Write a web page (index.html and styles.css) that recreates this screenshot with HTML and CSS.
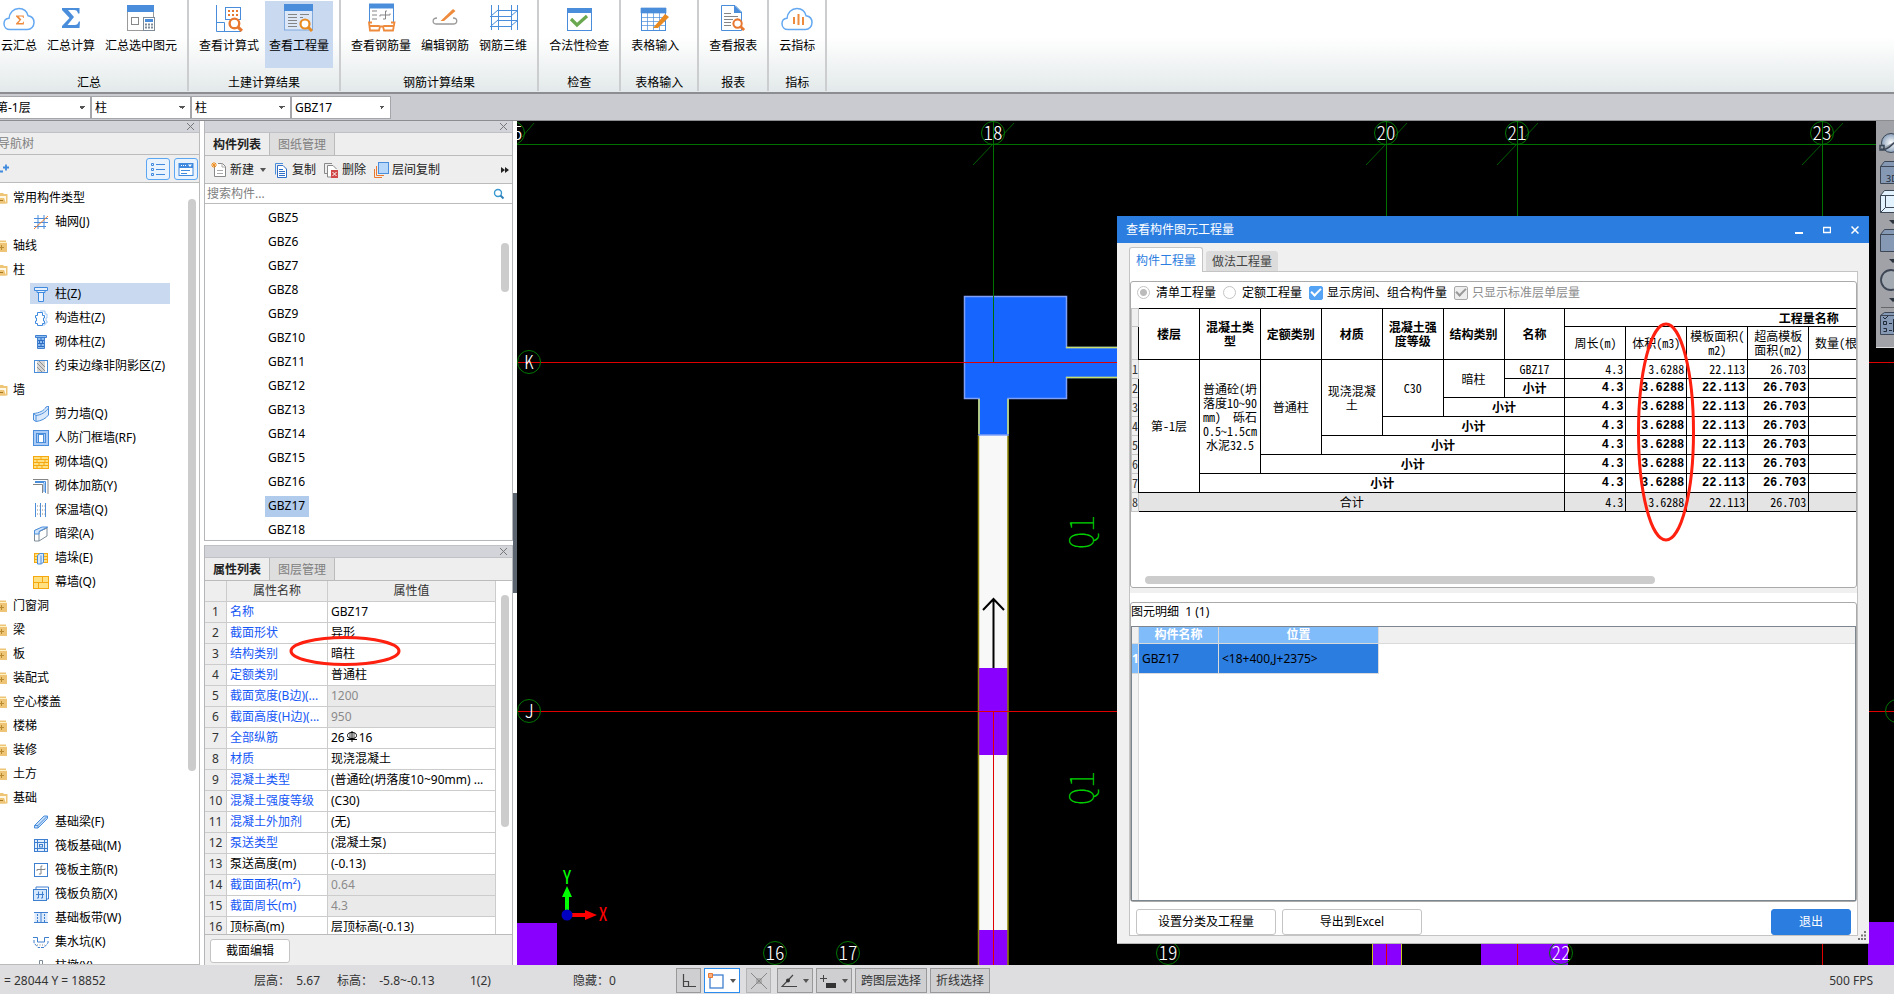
FILE: index.html
```html
<!DOCTYPE html>
<html lang="zh-CN">
<head>
<meta charset="utf-8">
<title>查看构件图元工程量</title>
<link rel="stylesheet" href="styles.css">
</head>
<body>
<svg class="defs" aria-hidden="true">
  <symbol id="cloud" viewBox="0 0 32 24"><path d="M7 22.500C3.500 22.500 1 20 1 16.800 1 13.500 3.200 11.500 6 11.300 6.500 5.500 10.500 1.500 16 1.500c4.800 0 8 3 9 7.200 3.500.5 6 3.200 6 6.800 0 4-3 7-6.500 7z" fill="#fff" stroke="#64a8f2" stroke-width="1.500"/></symbol>
  <symbol id="sigma" viewBox="0 0 18 20"><path d="M0 0H17.500V5.500H16C15.500 3 14.500 2 12 2H6L12 9 5.500 17H12.500C15 17 16 16 16.800 13.500H18L17.500 20H0V18L7.500 10 0 2Z" fill="currentColor"/></symbol>
  <symbol id="lens" viewBox="0 0 14 14"><circle cx="6" cy="6" r="4.500" fill="#fff" stroke="currentColor" stroke-width="2.200"/><path d="M9.200 9.200 13 13" stroke="currentColor" stroke-width="3"/></symbol>
  <symbol id="f-open" viewBox="0 0 8 12"><path d="M0 1H3L4 2H7.500V11.500H0Z" fill="#eec576"/><path d="M0 7V4H6V11.500L4 7Z" fill="#fff8e6"/><path d="M0 6H4L6 11.500H0Z" fill="#eec576"/><path d="M0 8.500H3" stroke="#a87820"/></symbol>
  <symbol id="f-shut" viewBox="0 0 8 12"><path d="M0 0.500H6V2H7V12H0Z" fill="#eec576"/><path d="M0 2.500H7" stroke="#fff1c8"/><path d="M0 7.500H4M1.500 5V10" stroke="#b98a30"/></symbol>
  <symbol id="i-grid" viewBox="0 0 16 16"><path d="M5 1V15M11 1V15M1 4.500H15M1 8.500H15M1 12.500H13" stroke="#4a8edb" fill="none"/><path d="M1 15 15 2" stroke="#f08030"/></symbol>
  <symbol id="i-col" viewBox="0 0 16 16"><path d="M1.500 1.500H14.500V4.500H1.500ZM4 4.500H12V6.500H4ZM5.500 6.500H10.500V15.500H5.500Z" fill="#e6f1fd" stroke="#3f8ade"/></symbol>
  <symbol id="i-gz" viewBox="0 0 16 16"><path d="M7 1H12V4H14V8H13V11H14V13H12V15H9" fill="none" stroke="#9cc6f5"/><path d="M4.500 2.500H9.500V5.500H11.500V8H10.500V11H11.500V13.500H9.500V15.500H4.500V13.500H2.500V11H3.500V8H2.500V5.500H4.500Z" fill="#fff" stroke="#3f8ade"/></symbol>
  <symbol id="i-qz" viewBox="0 0 16 16"><path d="M2.500 1.500H13.500V3.500H2.500ZM4.500 3.500H11.500V14.500H4.500Z" fill="#8fbdf0" stroke="#3f7fd0"/><path d="M5 6.500H11M5 9.500H11M5 12.500H11M8 4V6M6.500 7V9M9.500 7V9M8 10V12" stroke="#2d6cc0"/></symbol>
  <symbol id="i-ys" viewBox="0 0 16 16"><rect x="1.500" y="2.500" width="13" height="12" fill="#fff" stroke="#4a8edb"/><path d="M4 3H12V14H4Z" fill="#d4d4d4"/><path d="M4 5 12 13M4 9 9 14M6 3 12 9" stroke="#909090"/></symbol>
  <symbol id="i-jl" viewBox="0 0 16 16"><path d="M.500 7.500C6 7 11 5 13 1L15.500 0V9C13 12.500 8 15 3 15.500L.500 14Z" fill="#d9e9fb" stroke="#4a8edb"/><path d="M.500 7.500 3 9.500C8 9 13 6 15.500 2M3 9.500V15" stroke="#4a8edb" fill="none"/></symbol>
  <symbol id="i-rf" viewBox="0 0 16 16"><rect x=".5" y=".5" width="15" height="15" fill="#a9cbf5" stroke="#4a8edb"/><rect x="3.500" y="3.500" width="9" height="9" fill="none" stroke="#4a8edb"/><rect x="5.500" y="4.500" width="5" height="8" fill="#fff" stroke="#4a8edb"/></symbol>
  <symbol id="i-brick" viewBox="0 0 16 16"><rect x=".5" y="2.500" width="15" height="12" fill="#ffe082" stroke="#f5a80f"/><path d="M1 5.500H15M1 8.500H15M1 11.500H15M8 3V5M4 6V8M12 6V8M6 9V11M11 9V11M4 12V14M9 12V14" stroke="#f5a80f"/></symbol>
  <symbol id="i-jj" viewBox="0 0 16 16"><path d="M0 1.500H15V16M0 6.500H9.500V15" fill="none" stroke="#858585"/><path d="M2 3.500H12.500V15M2 4.500H11V14" fill="none" stroke="#4a8edb"/></symbol>
  <symbol id="i-bw" viewBox="0 0 16 16"><path d="M2.500 1V15M7.500 1V15M12.500 1V15" stroke="#4a8edb"/><path d="M4 4H14M4 8H14M4 12H14" stroke="#858585" stroke-dasharray="1 1.500"/></symbol>
  <symbol id="i-al" viewBox="0 0 16 16"><path d="M1.500 4.500 9 1.500H14.500L6 5.500V15H1.500ZM6 5.500 14 2V10L6 15" fill="#fff" stroke="#7d8b99"/><path d="M1.500 4.500 9 1H14.500L6 5.500V8H1.500Z" fill="#cfe3fb" stroke="#4a8edb"/></symbol>
  <symbol id="i-qd" viewBox="0 0 16 16"><rect x="1.500" y="3.500" width="13" height="9" fill="#ffe082" stroke="#f5a80f"/><path d="M1 6.500H15M1 9.500H15" stroke="#f5a80f"/><path d="M4.500 5.500 7 3.500H10.500V12L8.500 14H4.500ZM8 5.500V14" fill="#d9e9fb" stroke="#4a8edb"/></symbol>
  <symbol id="i-mq" viewBox="0 0 16 16"><rect x=".5" y="2.500" width="15" height="12" fill="#ffe082" stroke="#f5a80f"/><path d="M1 8.500H15M9.500 3V8M5.500 9V14" stroke="#f5a80f"/></symbol>
  <symbol id="i-jcl" viewBox="0 0 16 16"><path d="M1.500 11.500 11 2H14.500V4.500L5 14H1.500Z" fill="#c7def8" stroke="#4a8edb"/><path d="M1.500 11.500H5V14M5 11.500 14 2.500" fill="none" stroke="#4a8edb"/></symbol>
  <symbol id="i-fb" viewBox="0 0 16 16"><rect x="1.500" y="1.500" width="13" height="12" fill="#e3effc" stroke="#3f7fd0"/><path d="M4.500 2V13M11.500 2V13M2 4.500H14M2 10.500H14" stroke="#3f7fd0"/><rect x="6.500" y="6.500" width="3" height="2.500" fill="none" stroke="#3f7fd0"/></symbol>
  <symbol id="i-zj" viewBox="0 0 16 16"><rect x="1.500" y="1.500" width="13" height="13" fill="#fff" stroke="#3f7fd0"/><path d="M4 9V7.500H12V6.500M9.500 4H8V12H6" fill="none" stroke="#858585"/></symbol>
  <symbol id="i-fj" viewBox="0 0 16 16"><path d="M3 3V1H15.500V13H13" fill="#fff" stroke="#3f7fd0"/><rect x=".5" y="3.500" width="13" height="11" fill="#d4e6fb" stroke="#3f7fd0"/><path d="M3 8.500H11M5.500 5.500V12H4M9.500 5.500V12H8" fill="none" stroke="#3f7fd0"/></symbol>
  <symbol id="i-bd" viewBox="0 0 16 16"><rect x="1.500" y="2.500" width="13" height="10" fill="#dceafb"/><path d="M1 2.500H15M1 12.500H15M8 3V12" stroke="#3f7fd0"/><path d="M4.500 4V12M11.500 4V12" stroke="#3f7fd0" stroke-dasharray="2 1"/></symbol>
  <symbol id="i-js" viewBox="0 0 16 16"><path d="M0 3.500H4.500V8H11.500V3.500H16" fill="none" stroke="#3f7fd0"/><path d="M1 6V9L5 13.500H11L15 9V6" fill="none" stroke="#3f7fd0" stroke-dasharray="3 1"/><path d="M4 11H12" stroke="#888" stroke-dasharray="1 1.500"/></symbol>
  <symbol id="i-zd" viewBox="0 0 16 16"><path d="M6.500 12V2.500H9.500V12M3.500 14V10.500H12.500V14" fill="none" stroke="#7d8b99"/></symbol>
</svg>

<header class="ribbon">
  <section class="group first">
    <div class="items">
      <button class="item"><svg width="32" height="26" viewBox="0 0 32 26"><use href="#cloud" y="2" width="32" height="24"/><use href="#sigma" x="13" y="10" width="8" height="10" color="#ee8a3c"/></svg>云汇总</button>
      <button class="item"><svg width="32" height="26" viewBox="0 0 32 26"><use href="#sigma" x="7" y="3" width="18" height="20" color="#4a8edb"/></svg>汇总计算</button>
      <button class="item"><svg width="32" height="26" viewBox="0 0 32 26"><rect x="2.500" y="1.500" width="26" height="24" fill="#fff" stroke="#9a9a9a"/><path d="M2 0H29V7H2Z" fill="#4a8edb"/><rect x="6.500" y="12.500" width="7" height="7" fill="none" stroke="#888"/><rect x="18.500" y="12.500" width="11" height="13" fill="#fff" stroke="#7d8b99"/><path d="M20 14H28V17H20Z" fill="#4a8edb"/><path d="M20 19.500H28M20 22.500H28" stroke="#7d8b99" stroke-width="2" stroke-dasharray="2 1"/></svg>汇总选中图元</button>
    </div>
    <h2>汇总</h2>
  </section>
  <section class="group">
    <div class="items">
      <button class="item"><svg width="32" height="28" viewBox="0 0 32 28"><path d="M3.500 1V27.500H28M3.500 18.500H11.500V27" fill="none" stroke="#4a8edb"/><rect x="12.500" y="3.500" width="15" height="12" fill="#fff" stroke="#4a8edb"/><path d="M15 7H26M15 11H26" stroke="#e87830" stroke-width="2" stroke-dasharray="2 2"/><use href="#lens" x="15" y="13" width="15" height="15" color="#e87830"/></svg>查看计算式</button>
      <button class="item active"><svg width="32" height="28" viewBox="0 0 32 28"><rect x="1.500" y="1" width="28" height="25" fill="#dce7f7" stroke="#7fa8dc"/><path d="M1 0H30V7H1Z" fill="#4a8edb"/><path d="M5 10.500H14M17 10.500H26M5 13.500H14M17 13.500H20M5 16.500H14M5 19.500H14M5 22.500H14" stroke="#858585"/><use href="#lens" x="16" y="14" width="14" height="14" color="#e88a20"/></svg>查看工程量</button>
    </div>
    <h2>土建计算结果</h2>
  </section>
  <section class="group">
    <div class="items">
      <button class="item"><svg width="32" height="29" viewBox="0 0 32 29"><rect x="4.500" y="1" width="24" height="20" fill="#fff" stroke="#4a8edb"/><path d="M4 0H29V5H4Z" fill="#4a8edb"/><path d="M7 7.500H12M7 11.500H12M7 15.500H12" stroke="#858585"/><path d="M15 13V11.500H25V10M22 7.500H20.500V15.500H18" fill="none" stroke="#858585"/><path d="M2 19H31L29 29H4Z" fill="#fff"/><path d="M7 19H4L5 27H14L15 23H18L19 27H28L29.500 19H26M4.500 22.500H14L15 23M18 23 19 22.500H29" fill="none" stroke="#ee8a3c" stroke-width="1.800"/></svg>查看钢筋量</button>
      <button class="item"><svg width="32" height="28" viewBox="0 0 32 28"><path d="M8 14C3 14 3 20 7 20H24C29 20 29 14 24 14" fill="none" stroke="#999" stroke-width="1.300"/><path d="M11.500 17 24 5 26.500 7 15 17Z" fill="#ee8a3c"/></svg>编辑钢筋</button>
      <button class="item"><svg width="32" height="28" viewBox="0 0 32 28"><path d="M4.500 1V26M11.500 1V26M24.500 1V26M30.500 1V26M3 12.500H25M10 6.500H31M3 22.500H25M10 16.500H31M4 12 11 6M24 12 31 6M4 22 11 16M24 22 31 16" fill="none" stroke="#4a8edb"/></svg>钢筋三维</button>
    </div>
    <h2>钢筋计算结果</h2>
  </section>
  <section class="group">
    <div class="items">
      <button class="item"><svg width="32" height="26" viewBox="0 0 32 26"><rect x="4.500" y="3.500" width="24" height="22" fill="#fff" stroke="#4a8edb"/><path d="M4 3H29V8H4Z" fill="#4a8edb"/><path d="M8 14 14 20 24 11" fill="none" stroke="#6aa84f" stroke-width="3.200"/></svg>合法性检查</button>
    </div>
    <h2>检查</h2>
  </section>
  <section class="group wide">
    <div class="items">
      <button class="item"><svg width="32" height="26" viewBox="0 0 32 26"><rect x="2.500" y="3.500" width="24" height="22" fill="#fff" stroke="#4a8edb"/><path d="M2 3H27V8H2ZM3 12.500H26M3 16.500H26M3 20.500H26M8.500 8V25M14.500 8V25M20.500 8V25" fill="#4a8edb" stroke="#4a8edb" stroke-width=".7"/><path d="M14 23 26 9 30 12 19 23Z" fill="#e88a20"/></svg>表格输入</button>
    </div>
    <h2>表格输入</h2>
  </section>
  <section class="group">
    <div class="items">
      <button class="item"><svg width="32" height="28" viewBox="0 0 32 28"><path d="M4.500 1.500H18L24.500 8V26.500H4.500Z" fill="#fff" stroke="#4a8edb"/><path d="M17 1 25 9H17Z" fill="#4a8edb"/><path d="M7 9.500H14M7 12.500H21M7 15.500H16M7 18.500H14M7 21.500H14" stroke="#858585"/><use href="#lens" x="15" y="14" width="13" height="13" color="#e87830"/></svg>查看报表</button>
    </div>
    <h2>报表</h2>
  </section>
  <section class="group">
    <div class="items">
      <button class="item"><svg width="32" height="26" viewBox="0 0 32 26"><use href="#cloud" y="2" width="32" height="24"/><path d="M13 12V19M17.500 9V20M22 12V20" stroke="#ee8a3c" stroke-width="2"/></svg>云指标</button>
    </div>
    <h2>指标</h2>
  </section>
</header>

<div class="selectors">
  <select class="floor" aria-label="楼层"><option>第-1层</option></select>
  <select aria-label="构件大类"><option>柱</option></select>
  <select aria-label="构件类型"><option>柱</option></select>
  <select aria-label="构件"><option>GBZ17</option></select>
</div>

<main class="work">
  <aside class="nav">
    <div class="strip"><button class="shut" aria-label="关闭导航树"></button></div>
    <h2 class="navtitle">导航树</h2>
    <div class="navtools">
      <svg width="10" height="12" viewBox="0 0 10 12"><path d="M0 8.500H3M3 4.500H9M6 1.500V7.500" stroke="#3f8ade" stroke-width="1.800"/></svg>
      <button class="sq" aria-label="列表"><svg width="16" height="16" viewBox="0 0 16 16"><path d="M6 3.500H15M6 8.500H15M6 13.500H15" stroke="#3f8ade"/><path d="M1.500 2.500H3.500V4.500H1.500ZM1.500 7.500H3.500V9.500H1.500ZM1.500 12.500H3.500V14.500H1.500Z" fill="none" stroke="#3f8ade"/></svg></button>
      <button class="sq" aria-label="面板"><svg width="16" height="16" viewBox="0 0 16 16"><rect x="1" y="2.500" width="14" height="12" fill="#fff" stroke="#3f8ade"/><path d="M1 2H15V7H1Z" fill="#3f8ade"/><path d="M3 4.500H8" stroke="#fff" stroke-dasharray="1 1"/><path d="M10 3.500H14L12 6Z" fill="#fff"/><path d="M3 9.500H12M3 12.500H9" stroke="#3f8ade"/></svg></button>
    </div>
    <div class="treebox">
      <ul class="tree">
        <li class="dir"><svg><use href="#f-open"/></svg>常用构件类型</li>
        <li><svg><use href="#i-grid"/></svg><span>轴网(J)</span></li>
        <li class="dir"><svg><use href="#f-shut"/></svg>轴线</li>
        <li class="dir"><svg><use href="#f-open"/></svg>柱</li>
        <li class="on"><svg><use href="#i-col"/></svg><span>柱(Z)</span></li>
        <li><svg><use href="#i-gz"/></svg><span>构造柱(Z)</span></li>
        <li><svg><use href="#i-qz"/></svg><span>砌体柱(Z)</span></li>
        <li><svg><use href="#i-ys"/></svg><span>约束边缘非阴影区(Z)</span></li>
        <li class="dir"><svg><use href="#f-open"/></svg>墙</li>
        <li><svg><use href="#i-jl"/></svg><span>剪力墙(Q)</span></li>
        <li><svg><use href="#i-rf"/></svg><span>人防门框墙(RF)</span></li>
        <li><svg><use href="#i-brick"/></svg><span>砌体墙(Q)</span></li>
        <li><svg><use href="#i-jj"/></svg><span>砌体加筋(Y)</span></li>
        <li><svg><use href="#i-bw"/></svg><span>保温墙(Q)</span></li>
        <li><svg><use href="#i-al"/></svg><span>暗梁(A)</span></li>
        <li><svg><use href="#i-qd"/></svg><span>墙垛(E)</span></li>
        <li><svg><use href="#i-mq"/></svg><span>幕墙(Q)</span></li>
        <li class="dir"><svg><use href="#f-shut"/></svg>门窗洞</li>
        <li class="dir"><svg><use href="#f-shut"/></svg>梁</li>
        <li class="dir"><svg><use href="#f-shut"/></svg>板</li>
        <li class="dir"><svg><use href="#f-shut"/></svg>装配式</li>
        <li class="dir"><svg><use href="#f-shut"/></svg>空心楼盖</li>
        <li class="dir"><svg><use href="#f-shut"/></svg>楼梯</li>
        <li class="dir"><svg><use href="#f-shut"/></svg>装修</li>
        <li class="dir"><svg><use href="#f-shut"/></svg>土方</li>
        <li class="dir"><svg><use href="#f-open"/></svg>基础</li>
        <li><svg><use href="#i-jcl"/></svg><span>基础梁(F)</span></li>
        <li><svg><use href="#i-fb"/></svg><span>筏板基础(M)</span></li>
        <li><svg><use href="#i-zj"/></svg><span>筏板主筋(R)</span></li>
        <li><svg><use href="#i-fj"/></svg><span>筏板负筋(X)</span></li>
        <li><svg><use href="#i-bd"/></svg><span>基础板带(W)</span></li>
        <li><svg><use href="#i-js"/></svg><span>集水坑(K)</span></li>
        <li><svg><use href="#i-zd"/></svg><span>柱墩(Y)</span></li>
      </ul>
      <div class="track"><div class="thumb tree-thumb"></div></div>
    </div>
  </aside>

  <div class="side">
    <section class="panel parts">
      <div class="strip"><button class="shut" aria-label="关闭构件列表"></button></div>
      <div class="tabs"><button class="tab cur">构件列表</button><button class="tab">图纸管理</button></div>
      <div class="tools">
        <button><svg width="16" height="16" viewBox="0 0 16 16"><path d="M3.500 3V14.500H14.500V4.500L11.500 1.500H7" fill="#fff" stroke="#888"/><path d="M11 1V5H14M6 8.500H12M6 11.500H12" fill="none" stroke="#aaa"/><path d="M1 1 5 5M5 1 1 5M3 0V6M0 3H6" stroke="#f09020"/></svg>新建<i class="caret"></i></button>
        <button><svg width="16" height="16" viewBox="0 0 16 16"><path d="M10 1.500H2.500V12.500" fill="none" stroke="#4a8edb"/><path d="M4.500 3.500H10L13.500 7V15.500H4.500Z" fill="#fff" stroke="#3070c8"/><path d="M6 7.500H10M6 9.500H12M6 11.500H12M6 13.500H12" stroke="#3070c8"/></svg>复制</button>
        <button><svg width="16" height="16" viewBox="0 0 16 16"><path d="M9 1.500H1.500V11.500H4" fill="none" stroke="#888"/><path d="M9 15H4.500V3.500H10L13.500 7" fill="#fff" stroke="#888"/><rect x="8" y="8" width="7" height="8" fill="#d04848"/><path d="M9.500 10 13.500 14M13.500 10 9.500 14" stroke="#fff"/></svg>删除</button>
        <button><svg width="16" height="16" viewBox="0 0 16 16"><path d="M1.500 7V15.500H9M3.500 4V13.500H11" fill="none" stroke="#e87830"/><rect x="5.500" y=".5" width="10" height="11" fill="#b7d7fb" stroke="#4a8edb"/></svg>层间复制</button>
        <button class="more" aria-label="更多"><svg width="8" height="8" viewBox="0 0 8 8"><path d="M0 1 4 4 0 7ZM4 1 8 4 4 7Z" fill="#222"/></svg></button>
      </div>
      <div class="search"><input type="text" placeholder="搜索构件..." aria-label="搜索构件"><svg width="12" height="12" viewBox="0 0 12 12"><circle cx="5" cy="5" r="3.500" fill="none" stroke="#3898d0" stroke-width="1.400"/><path d="M7.500 7.500 10.500 10.500" stroke="#3080b8" stroke-width="2"/></svg></div>
      <div class="listbox">
        <ul class="list">
          <li><span>GBZ5</span></li><li><span>GBZ6</span></li><li><span>GBZ7</span></li><li><span>GBZ8</span></li><li><span>GBZ9</span></li><li><span>GBZ10</span></li><li><span>GBZ11</span></li><li><span>GBZ12</span></li><li><span>GBZ13</span></li><li><span>GBZ14</span></li><li><span>GBZ15</span></li><li><span>GBZ16</span></li><li class="on"><span>GBZ17</span></li><li><span>GBZ18</span></li>
        </ul>
        <div class="track"><div class="thumb list-thumb"></div></div>
      </div>
    </section>
    <section class="panel props">
      <div class="strip"><button class="shut" aria-label="关闭属性列表"></button></div>
      <div class="tabs"><button class="tab cur">属性列表</button><button class="tab">图层管理</button></div>
      <div class="propbox">
        <table class="proptable">
          <colgroup><col class="c-n"><col class="c-k"><col></colgroup>
          <thead><tr><th></th><th>属性名称</th><th>属性值</th></tr></thead>
          <tbody>
            <tr><th>1</th><td>名称</td><td>GBZ17</td></tr>
            <tr><th>2</th><td>截面形状</td><td>异形</td></tr>
            <tr><th>3</th><td>结构类别</td><td>暗柱</td></tr>
            <tr><th>4</th><td>定额类别</td><td>普通柱</td></tr>
            <tr class="ro"><th>5</th><td>截面宽度(B边)(...</td><td>1200</td></tr>
            <tr class="ro"><th>6</th><td>截面高度(H边)(...</td><td>950</td></tr>
            <tr><th>7</th><td>全部纵筋</td><td>26<svg class="rebar" width="12" height="12" viewBox="0 0 12 12"><ellipse cx="6" cy="4.500" rx="4.500" ry="3" fill="none" stroke="#000"/><path d="M6 0V11M1 8.500H11" stroke="#000"/><path d="M4 2V8M8 2V8" stroke="#000" stroke-width=".7"/></svg>16</td></tr>
            <tr><th>8</th><td>材质</td><td>现浇混凝土</td></tr>
            <tr><th>9</th><td>混凝土类型</td><td>(普通砼(坍落度10~90mm) ...</td></tr>
            <tr><th>10</th><td>混凝土强度等级</td><td>(C30)</td></tr>
            <tr><th>11</th><td>混凝土外加剂</td><td>(无)</td></tr>
            <tr><th>12</th><td>泵送类型</td><td>(混凝土泵)</td></tr>
            <tr class="own"><th>13</th><td>泵送高度(m)</td><td>(-0.13)</td></tr>
            <tr class="ro"><th>14</th><td>截面面积(m²)</td><td>0.64</td></tr>
            <tr class="ro"><th>15</th><td>截面周长(m)</td><td>4.3</td></tr>
            <tr class="own"><th>16</th><td>顶标高(m)</td><td>层顶标高(-0.13)</td></tr>
          </tbody>
        </table>
        <div class="track"><div class="thumb prop-thumb"></div></div>
        <svg class="mark mark-prop" width="112" height="32" viewBox="0 0 112 32"><ellipse cx="56" cy="16" rx="54" ry="13.500"/></svg>
      </div>
      <div class="foot"><button class="btn small">截面编辑</button></div>
    </section>
  </div>
  <div class="splitter"><button aria-label="收起"></button></div>

  <section class="canvas">
    <svg class="drawing" role="img" aria-label="轴网平面图">
      <g transform="translate(-517 -121)">
        <g fill="#8a00ff"><rect x="517" y="923" width="40" height="42"/><rect x="1372" y="940" width="29" height="25"/><rect x="1481" y="940" width="87" height="25"/><rect x="1868" y="922" width="120" height="43"/></g>
        <path d="M1372.500 940V965M1401.500 940V965" stroke="#c8c820"/>
        <rect x="979" y="435" width="29" height="530" fill="#f8f8f8"/>
        <rect x="979" y="668" width="29" height="87" fill="#8a00ff"/><rect x="979" y="930" width="29" height="35" fill="#8a00ff"/>
        <path d="M978.500 435V965M1008 435V965" stroke="#8a8200" stroke-width="1.500"/>
        <path d="M964.500 296.500H1066.500V347.500H1130V377.500H1066.500V398.500H1008V435H979V398.500H964.500Z" fill="#1765ff" stroke="#7ea0f8" stroke-width="1.500"/>
        <path d="M1066 347.500H1130M1066 377.500H1130M979 399V434M1008 399V434" stroke="#c8e070" stroke-width="1.500"/>
        <path d="M993.500 668V600M983 610 993.500 599 1004 610" fill="none" stroke="#000" stroke-width="2"/>
        <path d="M517 362.500H1894M517 711.500H1894M993.500 711V965M1386.500 940V965M1517.500 940V965M1822.500 940V965" stroke="#e00000" fill="none"/>
        <path d="M517 144.500H1894M993.500 121V362M1386.500 121V230M1517.500 121V230M1822.500 121V230" stroke="#007000" fill="none"/>
        <path d="M973 165 993 144M1001 137 1014 123M1366 165 1386 144M1394 137 1407 123M1497 165 1517 144M1525 137 1538 123M1802 165 1822 144M1830 137 1843 123M522 137 534 123" stroke="#006000" fill="none"/>
        <g fill="none" stroke="#007800"><circle cx="513" cy="133" r="11.500"/><circle cx="993" cy="133" r="11.500"/><circle cx="1386" cy="133" r="11.500"/><circle cx="1517" cy="133" r="11.500"/><circle cx="1822" cy="133" r="11.500"/><circle cx="529" cy="362" r="11.500"/><circle cx="529" cy="711" r="11.500"/><circle cx="775" cy="953" r="11.500"/><circle cx="848" cy="953" r="11.500"/><circle cx="1168" cy="953" r="11.500"/><circle cx="1561" cy="953" r="11.500"/><circle cx="1897" cy="711" r="11.500"/></g>
        <g class="axis"><text x="513" y="140">15</text><text x="993" y="140">18</text><text x="1386" y="140">20</text><text x="1517" y="140">21</text><text x="1822" y="140">23</text><text x="529" y="369">K</text><text x="529" y="718">J</text><text x="775" y="960">16</text><text x="848" y="960">17</text><text x="1168" y="960">19</text><text x="1561" y="960">22</text></g>
        <g class="wallname"><text transform="translate(1094 532) rotate(-90)">Q1</text><text transform="translate(1094 788) rotate(-90)">Q1</text></g>
        <path d="M565 912V897H562L567 886 572 897H569V912Z" fill="#0f0"/><path d="M571 913H585V910L597 915 585 920V917H571Z" fill="#f00"/><circle cx="567" cy="915" r="5.500" fill="#0000c0"/>
        <text class="gizmo gy" x="567" y="884">Y</text><text class="gizmo gx" x="603" y="921">X</text>
      </g>
    </svg>

    <div class="viewbar">
      <svg width="32" height="226" viewBox="0 0 32 226">
        <defs><radialGradient id="ball"><stop offset="0" stop-color="#fff"/><stop offset="1" stop-color="#8ba0ba"/></radialGradient></defs>
        <circle cx="15" cy="22" r="9.500" fill="url(#ball)" stroke="#3a4555"/><path d="M5 28C10 30 15 25 20 20M4 24.500H8V29H4Z" fill="#9aa3ad" stroke="#3a4555" stroke-width="1.500"/>
        <g stroke="#3c4654"><path d="M4.500 45.500 8.500 40.500H32V62.500H4.500ZM4.500 45.500H32" fill="#8598b4"/><path d="M4.500 74.500 8.500 69.500H32V91.500H4.500Z" fill="#e3f2ff"/><path d="M4.500 74.500H32M9.500 75V86.500H32M4.500 91.500 9.500 86.500" fill="none"/><path d="M4.500 113.500 8.500 108.500H32V130.500H4.500ZM4.500 113.500H32" fill="#8598b4"/></g>
        <text x="10" y="61" font-size="9" fill="#202a38">3D</text>
        <g fill="#2c3440"><path d="M13 99H23L17 103ZM13 138H23L17 142ZM13 177H23L17 181Z"/></g>
        <circle cx="15" cy="159" r="10" fill="#a5abb3" stroke="#3c4654" stroke-width="1.800"/>
        <path d="M5 186.500H32" stroke="#666"/><path d="M4.500 194.500 8.500 191.500H32V213.500H4.500ZM4.500 194.500H32" fill="#8598b4" stroke="#3c4654"/><path d="M7.500 200.500H10.500V203.500H7.500ZM7.500 207.500H10.500V210.500H7.500M13 202.500H16M13 209.500H16M17.500 198V211M7 196 9 198 12 195" fill="none" stroke="#202a38"/>
      </svg>
    </div>

    <div class="dialog" role="dialog" aria-label="查看构件图元工程量">
      <div class="titlebar"><span>查看构件图元工程量</span>
        <button aria-label="最小化"><svg width="8" height="8" viewBox="0 0 8 8"><path d="M0 7H8" stroke="#fff" stroke-width="2"/></svg></button>
        <button aria-label="最大化"><svg width="8" height="8" viewBox="0 0 8 8"><path d="M.500 1V6.500H7.500V1M0 1.500H8" stroke="#fff" fill="none" stroke-width="1.400"/></svg></button>
        <button aria-label="关闭"><svg width="8" height="8" viewBox="0 0 8 8"><path d="M0.500 .500 7.500 7.500M7.500 .500 .500 7.500" stroke="#fff" stroke-width="1.500"/></svg></button>
      </div>
      <div class="dtabs"><button class="cur">构件工程量</button><button>做法工程量</button></div>
      <div class="dpane">
        <div class="frame top">
          <div class="opts">
            <label><input type="radio" name="kind" checked disabled>清单工程量</label>
            <label><input type="radio" name="kind" disabled>定额工程量</label>
            <label class="ck"><input type="checkbox" checked>显示房间、组合构件量</label>
            <label class="ck off"><input type="checkbox" checked disabled>只显示标准层单层量</label>
          </div>
          <div class="qwrap">
            <table class="qty">
              <colgroup><col class="h"><col span="15"></colgroup>
              <thead>
                <tr class="r18"><td class="rn"></td><th rowspan="2">楼层</th><th rowspan="2">混凝土类<br>型</th><th rowspan="2">定额类别</th><th rowspan="2">材质</th><th rowspan="2">混凝土强<br>度等级</th><th rowspan="2">结构类别</th><th rowspan="2">名称</th><th colspan="8">工程量名称</th></tr>
                <tr class="r33"><td class="rn"></td><td>周长(m)</td><td>体积(m3)</td><td>模板面积(<br>m2)</td><td>超高模板<br>面积(m2)</td><td>数量(根)</td><td></td><td></td><td></td></tr>
              </thead>
              <tbody>
                <tr><td class="rn">1</td><td rowspan="7">第-1层</td><td rowspan="6">普通砼(坍<br>落度10~90<br>mm)&nbsp; 砾石<br>0.5~1.5cm<br>水泥32.5</td><td rowspan="5">普通柱</td><td rowspan="4">现浇混凝<br>土</td><td rowspan="3">C30</td><td rowspan="2">暗柱</td><td>GBZ17</td><td class="n">4.3</td><td class="n">3.6288</td><td class="n">22.113</td><td class="n">26.703</td><td></td><td></td><td></td><td></td></tr>
                <tr class="sub"><td class="rn">2</td><td>小计</td><td class="n">4.3</td><td class="n">3.6288</td><td class="n">22.113</td><td class="n">26.703</td><td></td><td></td><td></td><td></td></tr>
                <tr class="sub"><td class="rn">3</td><td colspan="2">小计</td><td class="n">4.3</td><td class="n">3.6288</td><td class="n">22.113</td><td class="n">26.703</td><td></td><td></td><td></td><td></td></tr>
                <tr class="sub"><td class="rn">4</td><td colspan="3">小计</td><td class="n">4.3</td><td class="n">3.6288</td><td class="n">22.113</td><td class="n">26.703</td><td></td><td></td><td></td><td></td></tr>
                <tr class="sub"><td class="rn">5</td><td colspan="4">小计</td><td class="n">4.3</td><td class="n">3.6288</td><td class="n">22.113</td><td class="n">26.703</td><td></td><td></td><td></td><td></td></tr>
                <tr class="sub"><td class="rn">6</td><td colspan="5">小计</td><td class="n">4.3</td><td class="n">3.6288</td><td class="n">22.113</td><td class="n">26.703</td><td></td><td></td><td></td><td></td></tr>
                <tr class="sub"><td class="rn">7</td><td colspan="6">小计</td><td class="n">4.3</td><td class="n">3.6288</td><td class="n">22.113</td><td class="n">26.703</td><td></td><td></td><td></td><td></td></tr>
                <tr class="total"><td class="rn">8</td><td colspan="7">合计</td><td class="n">4.3</td><td class="n">3.6288</td><td class="n">22.113</td><td class="n">26.703</td><td></td><td></td><td></td><td></td></tr>
              </tbody>
            </table>
          </div>
          <div class="hscroll"></div>
        </div>
        <div class="hsplit"></div>
        <div class="frame detail">
          <div class="dtitle">图元明细&nbsp; 1 (1)</div>
          <div class="dbox">
            <table class="dt">
              <colgroup><col class="h"><col class="a"><col class="b"><col></colgroup>
              <thead><tr><td class="dn"></td><th>构件名称</th><th>位置</th><td class="rest"></td></tr></thead>
              <tbody><tr><th class="dn on">1</th><td>GBZ17</td><td>&lt;18+400,J+2375&gt;</td><td class="blank"></td></tr></tbody>
            </table>
            <div class="gutter"></div>
          </div>
        </div>
        <div class="actions"><button class="btn">设置分类及工程量</button><button class="btn">导出到Excel</button><button class="btn primary">退出</button></div>
      </div>
      <svg class="grip" width="10" height="10" viewBox="0 0 10 10"><path d="M7 1H9M4 4.500H9M1 8H9" stroke="#777" stroke-width="2" stroke-dasharray="2 1"/></svg>
      <svg class="mark mark-qty" width="60" height="220" viewBox="0 0 60 220"><ellipse cx="30" cy="110" rx="27.500" ry="108"/></svg>
    </div>
  </section>
</main>

<footer class="status">
  <span class="s-pos">= 28044 Y = 18852</span>
  <span class="s-h">层高：&nbsp; 5.67</span>
  <span class="s-e">标高：&nbsp; -5.8~-0.13</span>
  <span class="s-c">1(2)</span>
  <span class="s-hide">隐藏：0</span>
  <div class="modes">
    <button class="m1" aria-label="正交"><svg width="14" height="14" viewBox="0 0 14 14"><path d="M1.500 0V12.500H14M1.500 7.500H6.500V12" fill="none" stroke="#444" stroke-width="1.200"/></svg></button>
    <button class="m2 on" aria-label="捕捉"><svg width="16" height="16" viewBox="0 0 16 16"><rect x="2" y="2" width="13" height="13" fill="#fff" stroke="#3f7fd0" stroke-width="1.300"/><path d="M.500 .500H4.500V4.500H.500Z" fill="#f8b080" stroke="#e87830"/></svg><i class="caret"></i></button>
    <button class="m1 dis" aria-label="交点"><svg width="16" height="16" viewBox="0 0 16 16"><path d="M0 0 16 16M16 0 0 16M6 6H10V10H6Z" fill="none" stroke="#888"/></svg></button>
    <button class="m2" aria-label="角度"><svg width="16" height="14" viewBox="0 0 16 14"><path d="M12 1 1 12.500H16" fill="none" stroke="#444" stroke-width="1.200"/><circle cx="7" cy="6.500" r="2" fill="#333"/></svg><i class="caret"></i></button>
    <button class="m2" aria-label="坐标"><svg width="16" height="14" viewBox="0 0 16 14"><path d="M0 4.500H7M3.500 1V8" stroke="#444"/><rect x="6" y="9" width="10" height="5" fill="#333"/></svg><i class="caret"></i></button>
    <button>跨图层选择</button>
    <button>折线选择</button>
  </div>
  <span class="fps">500 FPS</span>
</footer>
</body>
</html>
```

FILE: styles.css
```css
* { box-sizing: border-box; }
html, body { height: 100%; }
body {
  margin: 0;
  display: flex;
  flex-direction: column;
  overflow: hidden;
  background: #fff;
  color: #000;
  font: 12px/18px "Noto Sans", "Noto Sans CJK SC", sans-serif;
}
button, input, select { font: inherit; color: inherit; }
button { margin: 0; padding: 0; border: 0; background: none; white-space: nowrap; }
ul { list-style: none; margin: 0; padding: 0; }
h2 { margin: 0; font: inherit; }
svg { flex: none; }
.defs { position: absolute; width: 0; height: 0; }
.caret { border: 3px solid transparent; border-top: 4px solid #555; border-bottom: 0; }

/* Ribbon */
.ribbon {
  flex: none;
  display: flex;
  height: 94px;
  background: linear-gradient(#fff 40%, #e3e9ea);
  border-bottom: 2px solid #8b8d90;
}
.group {
  display: flex;
  flex-direction: column;
  justify-content: space-between;
  padding: 1px 6px 0;
  height: 91px;
  border-right: 2px solid #cbcdcf;
}
.group.first { margin-left: -9px; }
.group.wide { padding-right: 14px; }
.group.wide h2 { margin-right: -8px; }
.group h2 { text-align: center; line-height: 16px; }
.items { display: flex; gap: 2px; }
.item {
  display: flex;
  flex-direction: column;
  align-items: center;
  padding: 2px 4px 0;
  height: 67px;
}
.item svg { height: 30px; margin-bottom: 4px; }
.item.active { background: #c8d9f0; }

/* Selector bar */
.selectors {
  flex: none;
  display: flex;
  height: 27px;
  padding: 2px 0 1px;
  background: #c9cbd0;
  border-bottom: 1px solid #8b8d90;
}
.selectors select {
  appearance: none;
  width: 100px;
  padding: 0 3px;
  border: 1px solid #a4a6a9;
  border-radius: 0;
  background-color: #fff;
  background-image: linear-gradient(45deg, transparent 50%, #555 50%), linear-gradient(-45deg, transparent 50%, #555 50%);
  background-size: 3px 3px;
  background-position: right 8px center, right 5px center;
  background-repeat: no-repeat;
}
.selectors .floor { margin-left: -9px; padding-left: 4px; }

/* Work area */
.work { flex: 1; display: flex; min-height: 0; }
.strip {
  flex: none;
  display: flex;
  justify-content: flex-end;
  height: 12px;
  padding-right: 5px;
  background: #d3d4da;
  border-bottom: 1px solid #bfc1c5;
}
.shut {
  width: 7px;
  background:
    linear-gradient(45deg, transparent 43%, #777 43% 57%, transparent 57%) center / 7px 7px no-repeat,
    linear-gradient(-45deg, transparent 43%, #777 43% 57%, transparent 57%) center / 7px 7px no-repeat;
}
.nav {
  flex: none;
  display: flex;
  flex-direction: column;
  width: 200px;
  background: #eee;
  border-right: 1px solid #bbb;
  border-bottom: 1px solid #bbb;
}
.navtitle { height: 22px; line-height: 21px; color: #808080; border-bottom: 1px solid #bbb; margin-left: -2px; }
.navtools { display: flex; align-items: center; gap: 4px; height: 28px; padding-right: 1px; border-bottom: 1px solid #bbb; }
.navtools > svg { margin-right: auto; }
.sq {
  display: grid;
  place-items: center;
  width: 24px;
  height: 22px;
  border: 1px solid #5aa6f2;
  border-radius: 3px;
  background: #e9f3fe;
}
.treebox { flex: 1; display: flex; min-height: 0; background: #fff; overflow: hidden; }
.tree { flex: 1; padding-top: 3px; }
.tree li { display: flex; align-items: center; height: 24px; padding-left: 33px; white-space: nowrap; }
.tree li svg { width: 16px; height: 16px; margin-right: 6px; }
.tree .dir { padding-left: 0; }
.tree .dir svg { width: 8px; height: 12px; margin-right: 5px; }
.tree .on { background: linear-gradient(#c8d9f0, #c8d9f0) 30px 1px / 140px 21px no-repeat; }
.track { flex: none; width: 11px; }
.thumb { width: 8px; border-radius: 4px; background: #ccc; }
.tree-thumb { height: 572px; margin-top: 16px; }

/* Middle column */
.side { flex: none; display: flex; flex-direction: column; gap: 4px; width: 309px; margin-left: 4px; }
.panel { display: flex; flex-direction: column; background: #eee; border: 1px solid #b4b6b9; border-top: 0; }
.parts { flex: none; height: 420px; }
.props { flex: 1; min-height: 0; border-bottom: 0; border-top: 1px solid #bfc1c5; }
.tabs { flex: none; display: flex; height: 23px; border-bottom: 1px solid #bbb; }
.tab { padding: 1px 8px 0; border-right: 1px solid #bbb; background: #dedede; color: #808080; }
.tab.cur { background: #eee; color: #222; font-weight: 600; }
.tools { flex: none; display: flex; align-items: center; height: 28px; padding: 0 3px 0 6px; gap: 7px; border-bottom: 1px solid #bbb; }
.tools button { display: flex; align-items: center; gap: 3px; color: #222; }
.tools .caret { margin-left: 3px; }
.tools .more { margin-left: auto; }
.search { flex: none; display: flex; align-items: center; height: 20px; padding: 0 7px 0 2px; background: #fff; border-bottom: 1px solid #bbb; }
.search input { flex: 1; min-width: 0; padding: 0; border: 0; outline: 0; background: none; }
.search input::placeholder { color: #808080; opacity: 1; }
.listbox { flex: 1; display: flex; min-height: 0; background: #fff; overflow: hidden; }
.list { flex: 1; padding-top: 2px; }
.list li { display: flex; align-items: center; height: 24px; padding-left: 60px; }
.list span { height: 21px; padding: 0 4px 0 3px; line-height: 20px; }
.list .on span { background: #b0cbec; }
.list-thumb { height: 49px; margin-top: 39px; }

.propbox { position: relative; flex: 1; display: flex; justify-content: space-between; min-height: 0; background: #fff; overflow: hidden; border-bottom: 1px solid #bbb; }
.proptable { width: 291px; height: 0; table-layout: fixed; border-collapse: separate; border-spacing: 0; }
.proptable .c-n { width: 22px; }
.proptable .c-k { width: 101px; }
.proptable tr { height: 21px; }
.proptable th, .proptable td { height: 21px; padding: 0; border: solid #ccc; border-width: 0 1px 1px 0; font-weight: 400; line-height: 20px; white-space: nowrap; overflow: hidden; }
.proptable th { background: #eee; color: #333; }
.proptable td { padding-left: 3px; }
.proptable td:nth-child(2) { color: #1557f5; }
.proptable .own td:nth-child(2) { color: #000; }
.proptable .ro td:last-child { background: #eaeaea; color: #8a8a8a; }
.rebar { margin: 0 1px; vertical-align: -1px; }
.prop-thumb { height: 232px; margin-top: 14px; }
.foot { flex: none; display: flex; align-items: center; height: 30px; padding: 1px 0 0 5px; }
.btn { width: 140px; height: 26px; border: 1px solid #c4c4c4; border-radius: 3px; background: #fff; }
.btn.small { width: 80px; height: 24px; }
.splitter { flex: none; display: flex; align-items: center; width: 4px; background: #fff; }
.splitter button { width: 4px; height: 100px; background: #5c6470; }
.mark { position: absolute; fill: none; stroke: #ff2010; stroke-width: 3; pointer-events: none; }
.mark-prop { left: 84px; top: 54px; }

/* Drawing canvas */
.canvas { position: relative; flex: 1; min-width: 0; background: #000; overflow: hidden; }
.drawing { display: block; width: 100%; height: 100%; }
.axis { fill: #fff; font: 300 19px "Noto Sans CJK SC", sans-serif; font-feature-settings: "hwid"; text-anchor: middle; }
.wallname { fill: #0c0; font: 100 34px "Noto Sans CJK SC", sans-serif; font-feature-settings: "hwid"; text-anchor: middle; }
.gizmo { font: 18px "Noto Sans CJK SC", sans-serif; font-feature-settings: "hwid"; text-anchor: middle; }
.gy { fill: #0f0; }
.gx { fill: #f00; }
.viewbar { position: absolute; top: 0; right: 0; width: 18px; height: 227px; background: #a0a2a7; overflow: hidden; border-bottom: 1px solid #ddd; }

/* Dialog */
.dialog {
  position: absolute;
  top: 95px;
  right: 25px;
  bottom: 21px;
  display: flex;
  flex-direction: column;
  width: 752px;
  padding: 0 11px 7px 12px;
  background: #f0f0f0;
  border-bottom: 1px solid #b8b8b8;
}
.titlebar { flex: none; display: flex; align-items: center; gap: 20px; height: 27px; margin: 0 -11px 0 -12px; padding: 0 10px 0 9px; background: #2b7de0; color: #fff; }
.titlebar span { flex: 1; }
.titlebar button { display: flex; }
.dtabs { flex: none; display: flex; align-items: flex-end; gap: 3px; height: 29px; margin-bottom: -1px; z-index: 1; }
.dtabs button { height: 20px; padding: 1px 6px 0; margin-bottom: 1px; border-radius: 3px 3px 0 0; background: #dcdcdc; color: #444; }
.dtabs .cur { height: 25px; margin-bottom: 0; border: 1px solid #c4c4c4; border-bottom: 0; background: #fff; color: #2b7de0; }
.dpane { flex: 1; display: flex; flex-direction: column; min-height: 0; padding-top: 9px; background: #fff; border: 1px solid #c4c4c4; }
.frame { display: flex; flex-direction: column; border: 1px solid #aaa; border-radius: 3px; }
.top { flex: none; height: 307px; overflow: hidden; }
.opts { flex: none; display: flex; align-items: center; height: 26px; padding: 0 0 5px 6px; gap: 7px; }
.opts label { display: flex; align-items: center; gap: 6px; }
.opts .ck { gap: 4px; }
.opts .off { color: #8c8c8c; }
.opts input { appearance: none; width: 13px; height: 13px; margin: 0; border: 1px solid #c4c4c4; border-radius: 50%; background: #fff; }
.opts input[type="radio"]:checked { background: radial-gradient(circle, #bbb 3px, #fff 4px); }
.opts input[type="checkbox"] { display: grid; place-items: center; width: 14px; height: 14px; border-radius: 2px; background: #55a3f5; border-color: #55a3f5; }
.opts input[type="checkbox"]::before { content: ""; width: 8px; height: 4px; margin-bottom: 3px; border: solid #fff; border-width: 0 0 2px 2px; transform: rotate(-45deg); }
.opts .off input[type="checkbox"] { background: #eee; border-color: #aaa; }
.opts .off input[type="checkbox"]::before { border-color: #999; }
.qwrap { flex: 1; overflow: hidden; }
.qty { width: 922px; table-layout: fixed; border-collapse: collapse; font-family: "Noto Sans CJK SC", sans-serif; font-feature-settings: "hwid"; line-height: 14px; text-align: center; }
.qty .h { width: 7px; }
.qty tr { height: 19px; }
.qty .r18 { height: 18px; }
.qty .r33 { height: 33px; }
.qty th, .qty td { padding: 0; border: 1px solid #000; white-space: nowrap; }
.qty .n { padding-right: 2px; text-align: right; }
.sub td { font-weight: 700; }
.qty .sub .n { font-family: "Liberation Mono", monospace; }
.qty .rn { border-color: #c4c4c4; background: #f0f0f0; color: #333; font-weight: 400; }
.total td { background: #e4e4e4; }
.hscroll { flex: none; width: 510px; height: 8px; margin: 0 0 3px 14px; border-radius: 4px; background: #ccc; }
.hsplit { flex: none; height: 5px; margin-bottom: 9px; background: #f0f0f0; }
.detail { flex: 1; min-height: 0; }
.dtitle { flex: none; height: 23px; }
.dbox { flex: 1; display: flex; flex-direction: column; border: 1px solid #7d868f; min-height: 0; }
.dt { width: 100%; table-layout: fixed; border-spacing: 0; }
.dt .h { width: 7px; }
.dt .a { width: 80px; }
.dt .b { width: 160px; }
.dt th, .dt td { height: 30px; padding: 0 3px; background: #2b7de0; border: solid #dadada; border-width: 0 1px 1px 0; }
.dt td { padding-right: 0; }
.dt thead th { height: 17px; padding: 0; background: #80bbfa; color: #fff; line-height: 16px; }
.dt thead td { height: 17px; background: #f0f0f0; }
.dt .dn { padding: 0; }
.dt .on { background: #80bbfa; color: #fff; }
.dt .rest { border-right: 0; }
.dt .blank { background: #fff; border: 0; }
.gutter { flex: 1; width: 7px; background: #f4f4f4; border-right: 1px solid #dadada; }
.actions { flex: none; display: flex; gap: 6px; padding: 7px 6px 0; }
.actions .primary { width: 80px; margin-left: auto; border-color: #2b7de0; background: #2b7de0; color: #fff; }
.grip { position: absolute; right: 2px; bottom: 2px; }
.mark-qty { left: 519px; top: 106px; }

/* Status bar */
.status { flex: none; display: flex; align-items: center; height: 30px; padding: 2px 21px 0 4px; background: #dedee0; border-bottom: 1px solid #fff; color: #333; white-space: nowrap; }
.s-pos { width: 250px; }
.s-h { width: 83px; }
.s-e { width: 133px; }
.s-c { width: 103px; }
.s-hide { width: 103px; }
.modes { display: flex; gap: 3px; }
.modes button { display: flex; align-items: center; justify-content: center; gap: 6px; height: 25px; padding: 0 5px; border: 1px solid #999; background: #cfcfd2; }
.modes .m1 { width: 25px; }
.modes .m2 { width: 36px; }
.modes .on { background: #fff; border-color: #2b8cf0; }
.modes .dis { margin: 0 3px; border-color: #b4b4b4; }
.fps { margin-left: auto; }
```
